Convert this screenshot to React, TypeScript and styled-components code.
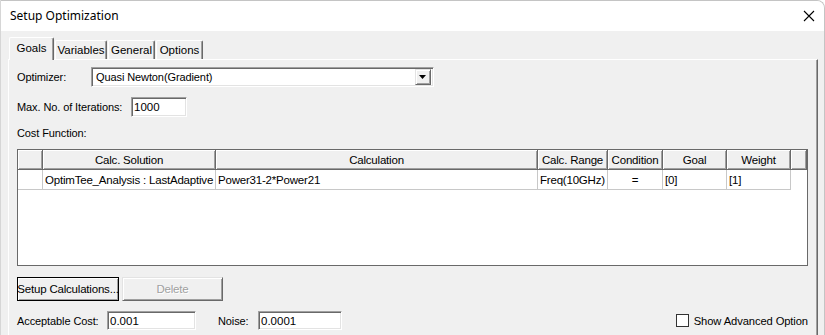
import styled, { createGlobalStyle } from 'styled-components';

const GlobalStyle = createGlobalStyle`
    html, body {
        margin: 0;
        padding: 0;
        background: #ffffff;
    }

    body {
        font-family: 'Liberation Sans', Arial, sans-serif;
        font-size: 11px;
        color: #000;
    }
`;

const StyledWindow = styled.div`
    width: 825px;
    height: 335px;
    box-sizing: border-box;
    border-top: 1px solid #c4c4c4;
    border-right: 1px solid #c4c4c4;
    border-left: 1px solid #d6d6d6;
    border-top-right-radius: 8px;
    overflow: hidden;
    display: flex;
    flex-direction: column;
    background: #f0f0f0;
`;

const StyledTitleBar = styled.div`
    height: 30px;
    flex-shrink: 0;
    background: #ffffff;
    display: flex;
    align-items: center;
    justify-content: space-between;
    padding: 0 9px 0 9px;

    span {
        font-family: 'Noto Sans', 'Open Sans', sans-serif;
        font-size: 12px;
        margin-top: -1px;
    }
`;

const StyledBody = styled.div`
    flex: 1;
    padding: 6px 6px 0 7px;
    display: flex;
    flex-direction: column;
`;

const StyledTabStrip = styled.div`
    display: flex;
    align-items: flex-end;
    height: 22px;
    padding-left: 1px;
    position: relative;
    z-index: 1;
`;

const StyledTab = styled.div<{ $active?: boolean; $width: number }>`
    box-sizing: border-box;
    width: ${({ $width }) => $width}px;
    height: ${({ $active }) => ($active ? '23px' : '19px')};
    margin-bottom: ${({ $active }) => ($active ? '-1px' : '0')};
    margin-left: ${({ $active }) => ($active ? '0' : '1px')};
    padding-top: ${({ $active }) => ($active ? '4px' : '3px')};
    background: #f0f0f0;
    border-top: 1px solid #ffffff;
    border-left: 1px solid #ffffff;
    border-right: 1px solid #696969;
    box-shadow: inset -1px 0 0 #a0a0a0;
    border-top-left-radius: 2px;
    border-top-right-radius: 2px;
    text-align: center;
    font-size: 11.5px;
    white-space: nowrap;
`;

const StyledPanel = styled.div`
    flex: 1;
    border-top: 1px solid #ffffff;
    border-left: 1px solid #ffffff;
    border-right: 1px solid #696969;
    box-shadow: inset -1px 0 0 #a0a0a0;
    padding: 7px 9px 0 8px;
    display: flex;
    flex-direction: column;
`;

const StyledRow = styled.div<{ $gap?: number }>`
    display: flex;
    align-items: center;
    margin-top: ${({ $gap }) => $gap ?? 0}px;
`;

const StyledLabel = styled.span<{ $width?: number; $offset?: number }>`
    display: inline-block;
    width: ${({ $width }) => ($width ? `${$width}px` : 'auto')};
    margin-left: ${({ $offset }) => $offset ?? 0}px;
    flex-shrink: 0;
    font-size: 11px;
    letter-spacing: -0.1px;
    white-space: nowrap;
`;

const StyledCombo = styled.div`
    box-sizing: border-box;
    width: 343px;
    height: 20px;
    display: flex;
    align-items: center;
    background: #ffffff;
    border-top: 1px solid #a0a0a0;
    border-left: 1px solid #a0a0a0;
    border-right: 1px solid #ffffff;
    border-bottom: 1px solid #ffffff;
    box-shadow: inset 1px 1px 0 #696969, inset -1px -1px 0 #e3e3e3;
    padding: 0 2px 0 4px;

    span {
        flex: 1;
        font-size: 11px;
        letter-spacing: -0.1px;
    }
`;

const StyledDropButton = styled.div`
    box-sizing: border-box;
    width: 16px;
    height: 16px;
    background: #f0f0f0;
    border-top: 1px solid #e3e3e3;
    border-left: 1px solid #e3e3e3;
    border-right: 1px solid #696969;
    border-bottom: 1px solid #696969;
    box-shadow: inset 1px 1px 0 #ffffff, inset -1px -1px 0 #a0a0a0;
    display: flex;
    align-items: center;
    justify-content: center;
`;

const StyledInput = styled.div<{ $width: number; $height?: number }>`
    box-sizing: border-box;
    width: ${({ $width }) => $width}px;
    height: ${({ $height }) => $height ?? 20}px;
    background: #ffffff;
    border-top: 1px solid #a0a0a0;
    border-left: 1px solid #a0a0a0;
    border-right: 1px solid #ffffff;
    border-bottom: 1px solid #ffffff;
    box-shadow: inset 1px 1px 0 #696969, inset -1px -1px 0 #e3e3e3;
    padding-left: 2px;
    display: flex;
    align-items: center;
    font-size: 11.5px;
`;

const StyledCaption = styled.div`
    margin-top: 9px;
    height: 14px;
    line-height: 14px;
    letter-spacing: -0.1px;
`;

const StyledGrid = styled.div`
    box-sizing: border-box;
    margin-top: 9px;
    height: 117px;
    background: #ffffff;
    border: 1px solid #696969;
    display: grid;
    grid-template-columns: 25px 173px 322px 70px 55px 64px 64px 1fr;
    grid-template-rows: 20px 20px;
    align-content: start;
`;

const StyledHeadCell = styled.div`
    box-sizing: border-box;
    background: #f0f0f0;
    border-right: 1px solid #696969;
    border-bottom: 1px solid #696969;
    box-shadow: inset 1px 1px 0 #ffffff, inset -1px -1px 0 #a0a0a0;
    display: flex;
    align-items: center;
    justify-content: center;
    font-size: 11.5px;
    letter-spacing: -0.2px;
    white-space: nowrap;
    overflow: hidden;
`;

const StyledCell = styled.div<{ $center?: boolean; $blank?: boolean }>`
    box-sizing: border-box;
    border-right: ${({ $blank }) => ($blank ? 'none' : '1px solid #c8c8c8')};
    border-bottom: ${({ $blank }) => ($blank ? 'none' : '1px solid #c8c8c8')};
    display: flex;
    align-items: center;
    justify-content: ${({ $center }) => ($center ? 'center' : 'flex-start')};
    padding-left: ${({ $center }) => ($center ? '0' : '2px')};
    font-size: 11.5px;
    letter-spacing: -0.2px;
    white-space: nowrap;
    overflow: hidden;
`;

const StyledButtonRow = styled.div`
    display: flex;
    gap: 3px;
    margin-top: 11px;
`;

const StyledButton = styled.div<{ $width: number; $default?: boolean; $disabled?: boolean }>`
    box-sizing: border-box;
    width: ${({ $width }) => $width}px;
    height: 24px;
    background: #f0f0f0;
    border: 1px solid ${({ $default }) => ($default ? '#000000' : '#696969')};
    border-top-color: ${({ $default }) => ($default ? '#000000' : '#e3e3e3')};
    border-left-color: ${({ $default }) => ($default ? '#000000' : '#e3e3e3')};
    box-shadow: inset 1px 1px 0 #ffffff, inset -1px -1px 0 #a0a0a0;
    display: flex;
    align-items: center;
    justify-content: center;
    font-size: 11.5px;
    letter-spacing: -0.2px;
    white-space: nowrap;
    color: ${({ $disabled }) => ($disabled ? '#a0a0a0' : '#000000')};
    text-shadow: ${({ $disabled }) => ($disabled ? '1px 1px 0 #ffffff' : 'none')};
`;

const StyledBottomRow = styled.div`
    display: flex;
    align-items: center;
    margin-top: 10px;
`;

const StyledCheckWrap = styled.label`
    margin-left: auto;
    display: flex;
    align-items: center;
    gap: 5px;
    font-size: 11.2px;
    letter-spacing: -0.1px;
`;

const StyledCheckbox = styled.span`
    box-sizing: border-box;
    width: 13px;
    height: 13px;
    background: #ffffff;
    border: 1px solid #333333;
`;

const columns = ['Calc. Solution', 'Calculation', 'Calc. Range', 'Condition', 'Goal', 'Weight'];

const tabs = [
    { label: 'Goals', width: 45, active: true },
    { label: 'Variables', width: 52 },
    { label: 'General', width: 47 },
    { label: 'Options', width: 47 },
];

const rows = [
    {
        solution: 'OptimTee_Analysis : LastAdaptive',
        calculation: 'Power31-2*Power21',
        range: 'Freq(10GHz)',
        condition: '=',
        goal: '[0]',
        weight: '[1]',
    },
];

function CloseIcon() {
    return (
        <svg width='12' height='12' viewBox='0 0 12 12'>
            <path d='M1 1 L11 11 M11 1 L1 11' stroke='#000' strokeWidth='1.1' fill='none' />
        </svg>
    );
}

function DropArrow() {
    return (
        <svg width='8' height='5' viewBox='0 0 8 5'>
            <path d='M0 0 H7 L3.5 4 Z' fill='#000' />
        </svg>
    );
}

function App() {
    return (
        <>
            <GlobalStyle />
            <StyledWindow>
                <StyledTitleBar>
                    <span>Setup Optimization</span>
                    <CloseIcon />
                </StyledTitleBar>
                <StyledBody>
                    <StyledTabStrip>
                        {tabs.map((t) => (
                            <StyledTab key={t.label} $active={t.active} $width={t.width}>
                                {t.label}
                            </StyledTab>
                        ))}
                    </StyledTabStrip>
                    <StyledPanel>
                        <StyledRow>
                            <StyledLabel $width={74}>Optimizer:</StyledLabel>
                            <StyledCombo>
                                <span>Quasi Newton(Gradient)</span>
                                <StyledDropButton>
                                    <DropArrow />
                                </StyledDropButton>
                            </StyledCombo>
                        </StyledRow>
                        <StyledRow $gap={10}>
                            <StyledLabel $width={114}>Max. No. of Iterations:</StyledLabel>
                            <StyledInput $width={56}>1000</StyledInput>
                        </StyledRow>
                        <StyledCaption>Cost Function:</StyledCaption>
                        <StyledGrid>
                            <StyledHeadCell />
                            {columns.map((c) => (
                                <StyledHeadCell key={c}>{c}</StyledHeadCell>
                            ))}
                            <StyledHeadCell />
                            {rows.map((r) => (
                                <>
                                    <StyledCell />
                                    <StyledCell>{r.solution}</StyledCell>
                                    <StyledCell>{r.calculation}</StyledCell>
                                    <StyledCell>{r.range}</StyledCell>
                                    <StyledCell $center>{r.condition}</StyledCell>
                                    <StyledCell>{r.goal}</StyledCell>
                                    <StyledCell>{r.weight}</StyledCell>
                                    <StyledCell $blank />
                                </>
                            ))}
                        </StyledGrid>
                        <StyledButtonRow>
                            <StyledButton $width={102} $default>
                                Setup Calculations...
                            </StyledButton>
                            <StyledButton $width={101} $disabled>
                                Delete
                            </StyledButton>
                        </StyledButtonRow>
                        <StyledBottomRow>
                            <StyledLabel $width={90}>Acceptable Cost:</StyledLabel>
                            <StyledInput $width={89} $height={19}>0.001</StyledInput>
                            <StyledLabel $width={40} $offset={22}>Noise:</StyledLabel>
                            <StyledInput $width={84} $height={19}>0.0001</StyledInput>
                            <StyledCheckWrap>
                                <StyledCheckbox />
                                Show Advanced Option
                            </StyledCheckWrap>
                        </StyledBottomRow>
                    </StyledPanel>
                </StyledBody>
            </StyledWindow>
        </>
    );
}

export default App;
